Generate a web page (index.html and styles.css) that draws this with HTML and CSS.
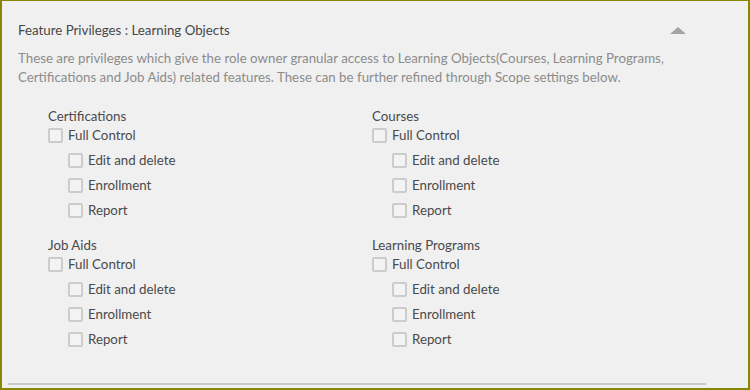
FILE: index.html
```html
<!DOCTYPE html>
<html lang="en">
<head>
    <meta charset="UTF-8">
    <title>Feature Privileges</title>
    <link rel="stylesheet" href="styles.css">
</head>
<body>
    <div class="panel">
        <div class="panel-head">
            <span class="panel-title">Feature Privileges : Learning Objects</span>
            <span class="caret"></span>
        </div>
        <p class="panel-desc">These are privileges which give the role owner granular access to Learning Objects(Courses, Learning Programs, Certifications and Job Aids) related features. These can be further refined through Scope settings below.</p>

        <div class="groups">
            <div class="group">
                <div class="group-name">Certifications</div>
                <label class="check"><span class="box"></span>Full Control</label>
                <div class="sub">
                    <label class="check"><span class="box"></span>Edit and delete</label>
                    <label class="check"><span class="box"></span>Enrollment</label>
                    <label class="check"><span class="box"></span>Report</label>
                </div>
            </div>
            <div class="group">
                <div class="group-name">Courses</div>
                <label class="check"><span class="box"></span>Full Control</label>
                <div class="sub">
                    <label class="check"><span class="box"></span>Edit and delete</label>
                    <label class="check"><span class="box"></span>Enrollment</label>
                    <label class="check"><span class="box"></span>Report</label>
                </div>
            </div>
            <div class="group">
                <div class="group-name">Job Aids</div>
                <label class="check"><span class="box"></span>Full Control</label>
                <div class="sub">
                    <label class="check"><span class="box"></span>Edit and delete</label>
                    <label class="check"><span class="box"></span>Enrollment</label>
                    <label class="check"><span class="box"></span>Report</label>
                </div>
            </div>
            <div class="group">
                <div class="group-name">Learning Programs</div>
                <label class="check"><span class="box"></span>Full Control</label>
                <div class="sub">
                    <label class="check"><span class="box"></span>Edit and delete</label>
                    <label class="check"><span class="box"></span>Enrollment</label>
                    <label class="check"><span class="box"></span>Report</label>
                </div>
            </div>
        </div>
        <div class="rule"></div>
    </div>
</body>
</html>
```

FILE: styles.css
```css
body {
    margin: 0;
    font-family: Lato, 'Open Sans', sans-serif;
    font-size: 13.3px;
    color: #4a4a4a;
}

.panel {
    box-sizing: border-box;
    width: 750px;
    height: 390px;
    background-color: #f0f0f0;
    border: 2px solid #878700;
    border-top-width: 1px;
    padding: 0 0 0 6px;
}
.panel-head {
    display: flex;
    justify-content: space-between;
    align-items: center;
    padding: 20px 62px 0 10px;
    height: 18px;
}
.panel-title {
    color: #474747;
}
.caret {
    width: 0;
    height: 0;
    border-left: 8px solid transparent;
    border-right: 8px solid transparent;
    border-bottom: 7px solid #a3a3a3;
    margin-top: 1px;
}
.panel-desc {
    margin: 10px 60px 0 10px;
    line-height: 19px;
    color: #8c8c8c;
}

.groups {
    display: grid;
    grid-template-columns: 324px 324px;
    row-gap: 20px;
    margin: 22px 0 0 40px;
}
.group-name {
    line-height: 15px;
    margin-bottom: 3px;
}
.check {
    display: flex;
    align-items: center;
    gap: 5px;
    height: 16px;
    line-height: 16px;
}
.box {
    box-sizing: border-box;
    width: 15px;
    height: 15px;
    border: 2px solid #cccccc;
    border-radius: 2px;
    background-color: #f3f3f3;
}
.sub {
    display: flex;
    flex-direction: column;
    gap: 9px;
    margin: 9px 0 0 20px;
}

.rule {
    width: 698px;
    height: 2px;
    background-color: #c9c9c9;
    margin-top: 36px;
}
```
